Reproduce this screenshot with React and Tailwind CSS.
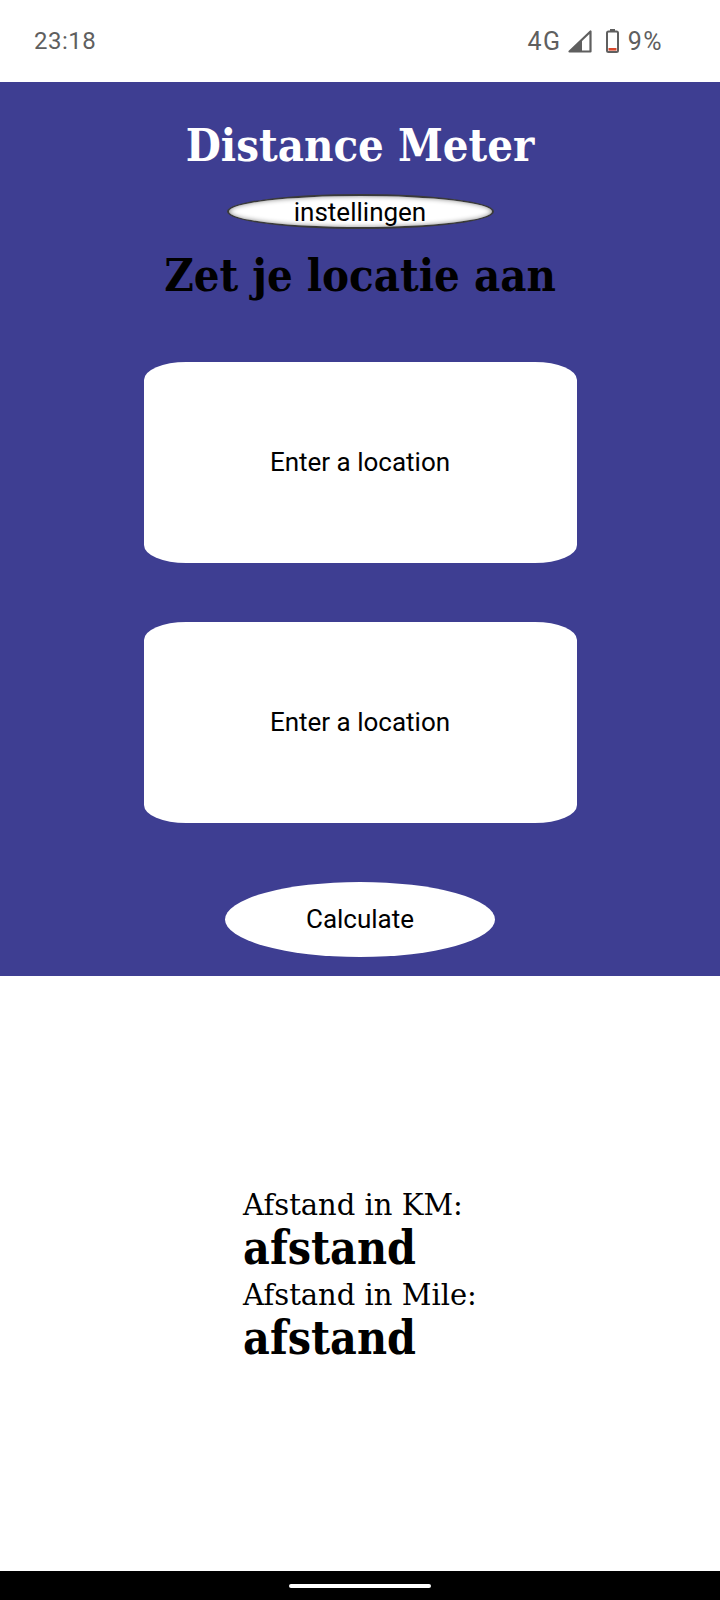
import React from "react";

const serif = "font-['DejaVu_Serif','Liberation_Serif',serif]";
const serifBold = "font-['DejaVu_Serif_Condensed','DejaVu_Serif',serif] font-stretch-condensed";
const sans = "font-['Roboto','Liberation_Sans',sans-serif]";

function StatusBar() {
  return (
    <div className={`flex h-[82px] items-center justify-between bg-white pl-[34px] pr-[57px] text-[#5f5f5f] ${sans}`}>
      <span className="text-[24px] leading-none tracking-[0.5px]">23:18</span>
      <div className="flex items-center">
        <span className="text-[25px] leading-none tracking-[1.5px]">4G</span>
        <svg className="ml-[6px]" width="24" height="23" viewBox="0 0 24 23">
          <path d="M22.5 1.5 L22.5 21.5 L1.5 21.5 Z" fill="none" stroke="#5f5f5f" strokeWidth="2.2" strokeLinejoin="round" />
          <path d="M1.5 21.5 L14 9.5 L14 21.5 Z" fill="#5f5f5f" />
        </svg>
        <svg className="ml-[14px]" width="13" height="24" viewBox="0 0 13 24">
          <rect x="4" y="0" width="5" height="3" fill="#5f5f5f" />
          <rect x="1" y="2.5" width="11" height="20.5" rx="1.5" fill="none" stroke="#5f5f5f" strokeWidth="2" />
          <rect x="2.5" y="19" width="8" height="2.6" fill="#d9482b" />
        </svg>
        <span className="ml-[9px] text-[25px] leading-none tracking-[1.5px]">9%</span>
      </div>
    </div>
  );
}

function LocationBox() {
  return (
    <div className="flex h-[201px] w-[433px] items-center justify-center rounded-[42px_/_18px] bg-white">
      <span className={`text-[26px] text-black ${sans}`}>Enter a location</span>
    </div>
  );
}

export default function App() {
  return (
    <div className="flex h-[1600px] w-[720px] flex-col bg-white">
      <StatusBar />

      <div className="flex h-[894px] flex-col items-center bg-[#3e3e92] pt-[40px]">
        <h1 className={`text-[45px] font-bold leading-[48px] text-white ${serifBold}`}>Distance Meter</h1>
        <button
          type="button"
          className={`mt-[24px] flex h-[35px] w-[267px] items-center justify-center rounded-[50%] border-2 border-[#3a3a3a] bg-white text-[26px] leading-none text-black shadow-[inset_0_0_5px_#8a8a8a] ${sans}`}
        >
          instellingen
        </button>
        <h2 className={`mt-[21px] text-[45px] font-bold leading-[52px] text-black ${serifBold}`}>Zet je locatie aan</h2>

        <div className="mt-[60px] flex flex-col gap-[59px]">
          <LocationBox />
          <LocationBox />
        </div>

        <button
          type="button"
          className={`mt-[59px] flex h-[75px] w-[270px] items-center justify-center rounded-[50%] bg-white text-[26px] text-black ${sans}`}
        >
          Calculate
        </button>
      </div>

      <div className="flex flex-1 justify-center pt-[211px]">
        <div className="text-left text-black">
          <p className={`text-[29px] leading-[36px] ${serif}`}>Afstand in KM:</p>
          <p className={`text-[46px] font-bold leading-[50px] ${serifBold}`}>afstand</p>
          <p className={`mt-[4px] text-[29px] leading-[36px] ${serif}`}>Afstand in Mile:</p>
          <p className={`text-[46px] font-bold leading-[50px] ${serifBold}`}>afstand</p>
        </div>
      </div>

      <div className="flex h-[29px] items-center justify-center bg-black">
        <div className="h-[4px] w-[142px] rounded-full bg-white" />
      </div>
    </div>
  );
}
